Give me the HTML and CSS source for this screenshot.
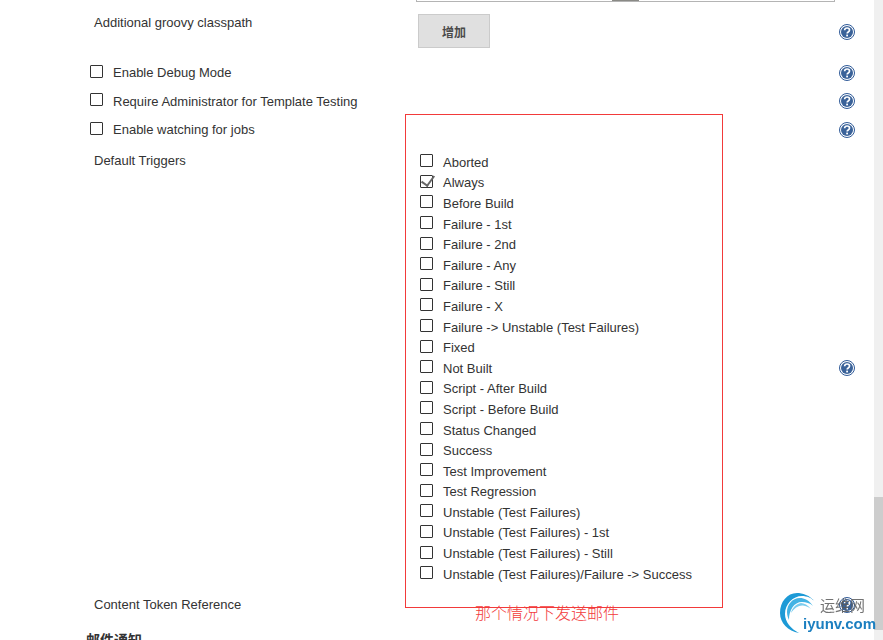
FILE: index.html
```html
<!DOCTYPE html>
<html lang="zh">
<head>
<meta charset="utf-8">
<title>Jenkins</title>
<link rel="stylesheet" href="styles.css">
</head>
<body>
<svg class="defs" width="0" height="0" aria-hidden="true">
  <symbol id="help" viewBox="0 0 16 16">
    <circle cx="8" cy="8" r="7.5" fill="#fff" stroke="#2f5a98" stroke-width="1"/>
    <circle cx="8" cy="8" r="6" fill="#3a6299"/>
    <path d="M5.6 6.2C5.7 4.7 6.8 4 8.1 4c1.4 0 2.4.8 2.4 2 0 1-.6 1.5-1.3 2-.6.4-1 .8-1 1.6" fill="none" stroke="#fff" stroke-width="1.7"/>
    <rect x="7.2" y="10.6" width="1.8" height="1.8" fill="#fff"/>
  </symbol>
</svg>
<div class="page">
  <main class="main">
    <div class="top-field"><span class="top-thumb"></span></div>

    <section class="row row-classpath">
      <div class="label">Additional groovy classpath</div>
      <div class="content"><button class="add-btn" type="button">增加</button></div>
      <svg class="help help-low"><use href="#help"/></svg>
    </section>

    <section class="row row-check">
      <label class="check-label"><input type="checkbox">Enable Debug Mode</label>
      <svg class="help"><use href="#help"/></svg>
    </section>
    <section class="row row-check">
      <label class="check-label"><input type="checkbox">Require Administrator for Template Testing</label>
      <svg class="help"><use href="#help"/></svg>
    </section>
    <section class="row row-check row-check-last">
      <label class="check-label"><input type="checkbox">Enable watching for jobs</label>
      <svg class="help"><use href="#help"/></svg>
    </section>

    <section class="row row-triggers">
      <div class="label">Default Triggers</div>
      <ul class="triggers">
        <li><label><input type="checkbox">Aborted</label></li>
        <li><label><input type="checkbox" checked>Always</label></li>
        <li><label><input type="checkbox">Before Build</label></li>
        <li><label><input type="checkbox">Failure - 1st</label></li>
        <li><label><input type="checkbox">Failure - 2nd</label></li>
        <li><label><input type="checkbox">Failure - Any</label></li>
        <li><label><input type="checkbox">Failure - Still</label></li>
        <li><label><input type="checkbox">Failure - X</label></li>
        <li><label><input type="checkbox">Failure -&gt; Unstable (Test Failures)</label></li>
        <li><label><input type="checkbox">Fixed</label></li>
        <li><label><input type="checkbox">Not Built</label></li>
        <li><label><input type="checkbox">Script - After Build</label></li>
        <li><label><input type="checkbox">Script - Before Build</label></li>
        <li><label><input type="checkbox">Status Changed</label></li>
        <li><label><input type="checkbox">Success</label></li>
        <li><label><input type="checkbox">Test Improvement</label></li>
        <li><label><input type="checkbox">Test Regression</label></li>
        <li><label><input type="checkbox">Unstable (Test Failures)</label></li>
        <li><label><input type="checkbox">Unstable (Test Failures) - 1st</label></li>
        <li><label><input type="checkbox">Unstable (Test Failures) - Still</label></li>
        <li><label><input type="checkbox">Unstable (Test Failures)/Failure -&gt; Success</label></li>
      </ul>
      <svg class="help help-mid"><use href="#help"/></svg>
    </section>

    <section class="row row-token">
      <div class="label">Content Token Reference</div>
      <div class="content"></div>
      <svg class="help"><use href="#help"/></svg>
    </section>

    <h2 class="section-title">邮件通知</h2>
  </main>
  <aside class="scrollbar"><div class="scroll-thumb"></div></aside>

  <div class="annotation-box"></div>
  <div class="annotation-text">那个情况下发送邮件</div>

  <div class="watermark">
    <svg class="wm-arcs" viewBox="0 0 40 42" width="40" height="42" aria-hidden="true">
      <path d="M35 9C30 2 22 0 17 0 7 0 0 9 0 20c0 10 8 18 19 20-8-4-14-11-14-19C5 11 13 3 22 3c5 0 10 2 13 6z" fill="#1d9ad6"/>
      <path d="M33 13C29 7 24 5 20 5 12 5 7 12 7 19c0 3 1 6 2 8C9 17 14 9 22 9c4 0 8 1 11 4z" fill="#43b3e4"/>
      <path d="M31 16c-3-4-7-6-10-6-5 1-9 5-10 10 3-5 8-8 12-7.500 3 .5 6 1.500 8 3.500z" fill="#7accee"/>
    </svg>
    <span class="wm-cn">运维网</span>
    <span class="wm-en">iyunv.com</span>
  </div>
</div>
</body>
</html>
```

FILE: styles.css
```css
* { box-sizing: border-box; }
html, body {
  margin: 0;
  height: 640px;
  overflow: hidden;
  background: #fff;
}
body {
  font-family: "Liberation Sans", Arial, "Noto Sans CJK SC", sans-serif;
  font-size: 13px;
  color: #333;
}
.defs { position: absolute; }
.page {
  position: relative;
  display: flex;
  width: 883px;
  height: 640px;
  overflow: hidden;
}
.main { width: 874px; flex: none; }

.scrollbar {
  width: 9px;
  flex: none;
  background: #f0f0f0;
  padding-top: 497px;
}
.scroll-thumb { height: 133px; background: #cdcdcd; }

.top-field {
  display: flex;
  justify-content: flex-start;
  margin-left: 416px;
  width: 419px;
  height: 2px;
  background: #fff;
  border: 1px solid #b4b4b4;
  border-top: 0;
  padding-left: 195px;
}
.top-thumb { width: 27px; height: 1px; background: #8a8a86; }

.row {
  display: grid;
  grid-template-columns: 418px 421px 16px;
}
.label { padding: 1px 0 0 94px; line-height: 16px; }
.help { width: 16px; height: 16px; grid-column: 3; }

.row-classpath { height: 56px; padding-top: 12px; }
.help-low { margin-top: 10px; }
.add-btn {
  display: block;
  width: 72px;
  height: 34px;
  padding: 0;
  background: #e0e0e0;
  border: 1px solid #cbcbcb;
  color: #4a4a4a;
  font-family: "Noto Sans CJK SC", sans-serif;
  font-size: 12px;
  font-weight: 700;
  text-align: center;
}

.row-check { height: 28.5px; align-items: center; }
.row-check .check-label { grid-column: 1 / 3; padding: 2px 0 0 90px; }
.row-check-last { margin-bottom: 8px; }
.row-check .help { margin-top: 1px; }

.check-label, .triggers label {
  display: flex;
  align-items: center;
  line-height: 16px;
}
input[type="checkbox"] {
  appearance: none;
  position: relative;
  flex: none;
  width: 13px;
  height: 13px;
  margin: -4px 10px 0 0;
  background: #fff;
  border: 1px solid #333;
  border-radius: 1px;
}
input[type="checkbox"]:checked::after {
  content: "";
  position: absolute;
  left: 2.5px;
  top: -3px;
  width: 6px;
  height: 11px;
  border: solid #666;
  border-width: 0 2px 2px 0;
  transform: rotate(36deg);
}

.row-triggers { height: 433px; }
.triggers {
  list-style: none;
  margin: 0;
  padding: 0 0 0 2px;
}
.triggers li {
  height: 20.6px;
  padding-top: 2px;
  display: flex;
  align-items: center;
}
.help-mid { align-self: center; }

.row-token { height: 44px; padding-top: 11px; }
.row-token .help { margin-top: 1px; }

.section-title {
  margin: 0 0 0 86px;
  font-family: "Noto Sans CJK SC", sans-serif;
  font-size: 14px;
  line-height: 20px;
  font-weight: 700;
  color: #333;
}

.annotation-box {
  position: absolute;
  left: 405px;
  top: 114px;
  width: 318px;
  height: 494px;
  border: 1px solid #f23a3a;
  pointer-events: none;
}
.annotation-text {
  position: absolute;
  left: 475px;
  top: 602px;
  font-family: "Noto Sans CJK SC", sans-serif;
  font-size: 16px;
  font-weight: 300;
  line-height: 20px;
  color: #f23a3a;
  white-space: nowrap;
}

.watermark {
  position: absolute;
  left: 780px;
  top: 592px;
  width: 100px;
  height: 44px;
  filter: blur(0.3px);
}
.wm-arcs { position: absolute; left: 0; top: 1px; }
.wm-cn {
  position: absolute;
  left: 40px;
  top: 3px;
  font-family: "Noto Sans CJK SC", sans-serif;
  font-size: 15px;
  line-height: 20px;
  color: rgba(90, 90, 90, .85);
  white-space: nowrap;
}
.wm-en {
  position: absolute;
  left: 23px;
  top: 23px;
  font-family: "Liberation Sans", Arial, sans-serif;
  font-size: 15px;
  line-height: 18px;
  font-weight: 700;
  color: #1c7fc0;
  white-space: nowrap;
}
```
